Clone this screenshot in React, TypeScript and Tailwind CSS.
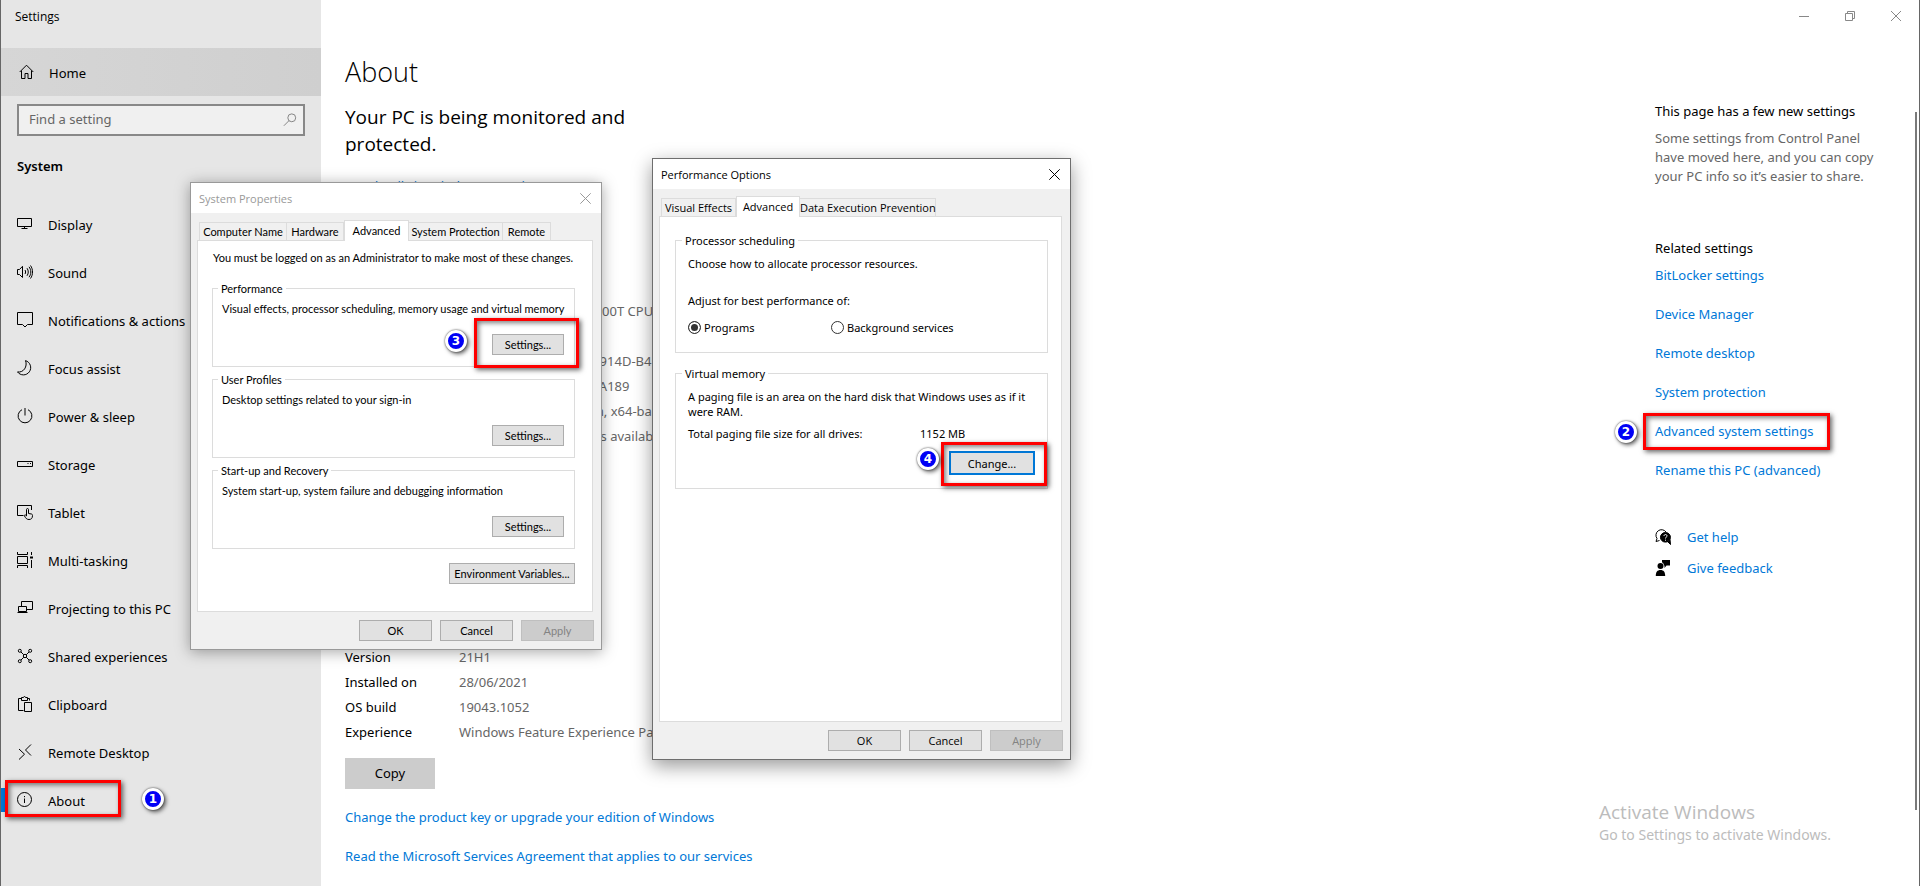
import React from 'react';

const BODY_FONT = "font-['Segoe_UI','Noto_Sans',sans-serif]";
const UI_FONT = "font-['Segoe_UI','Open_Sans',sans-serif]";
const CLASSIC_FONT = "font-['Microsoft_Sans_Serif','Lato',sans-serif]";

interface IconProps {
    children: React.ReactNode;
    className?: string;
}

const Icon: React.FC<IconProps> = ({ children, className = 'w-4 h-4' }) => (
    <svg className={className} viewBox="0 0 16 16" fill="none" stroke="currentColor" strokeWidth="1" aria-hidden="true">
        {children}
    </svg>
);

const navItems = [
    {
        label: 'Display',
        icon: <path d="M.5 2.5h14v8H.5zM7.5 10.5v2M4.5 12.5h6" />,
    },
    {
        label: 'Sound',
        icon: <path d="M.5 5.5h2l3-3.2v11.2l-3-3H.5zM8 6c.8 1.200.8 2.800 0 4M10 4.200c1.700 2.300 1.700 5.300 0 7.600M12 2.800c2.400 3.100 2.400 7.300 0 10.400M13.500 1.500c2.700 3.900 2.700 9.100 0 13" />,
    },
    {
        label: 'Notifications & actions',
        icon: <path d="M.5.5h15v12h-5L8 15l-2.500-2.500h-5z" />,
    },
    {
        label: 'Focus assist',
        icon: <path d="M8.500.6a7.300 7.300 0 1 1-8 11.300C6.500 13 10.800 6.500 8.500.6z" />,
    },
    {
        label: 'Power & sleep',
        icon: <path d="M5 1.700a6.900 6.900 0 1 0 6 0M8 0v7.500" />,
    },
    {
        label: 'Storage',
        icon: <path d="M.5 5.500h15v5H.5zM10.500 7.500h1M13 7.500h1" />,
    },
    {
        label: 'Tablet',
        icon: <path d="M6.500 11.500h-6v-10h14V6M9.500 12V5.500c0-1.300 2-1.300 2 0v4l3 .5c.7.2 1 .7 1 1.500 0 3-1.500 4-3.500 4s-3-.8-4.500-3.500c-.5-1 .7-1.700 2-.2" />,
    },
    {
        label: 'Multi-tasking',
        icon: (
            <>
                <path d="M.5 4.500h10v7H.5zM.5 0v2.500h10V0M.5 16v-2.500h10V16M14.500 0v3M14.500 8v8" />
                <path d="M13 4.500h3v2h-3z" fill="currentColor" stroke="none" />
            </>
        ),
    },
    {
        label: 'Projecting to this PC',
        icon: <path d="M4.500 6.500v-5h11v8h-5.500M1.500 6.500h8v5h-8zM.5 12.500h10" />,
    },
    {
        label: 'Shared experiences',
        icon: (
            <>
                <circle cx="2.800" cy="2.800" r="1.500" />
                <circle cx="13.200" cy="2.800" r="1.500" />
                <circle cx="2.800" cy="13.200" r="1.500" />
                <circle cx="13.200" cy="13.200" r="1.500" />
                <circle cx="8" cy="8" r="1.700" />
                <path d="M4 4l2.800 2.800M12 4L9.200 6.800M4 12l2.800-2.800M12 12L9.200 9.200" />
            </>
        ),
    },
    {
        label: 'Clipboard',
        icon: <path d="M6.500 14.500h-5v-12h3M10.500 2.500h2v2M4.500 4.500v-3h2c0-1.300 2-1.300 2 0h2v3zM7.500 6.500h7v9h-7z" />,
    },
    {
        label: 'Remote Desktop',
        icon: <path d="M14 .5L8.500 6l5.500 5.500M2 5l5.500 5.200L2 15.500" />,
    },
    {
        label: 'About',
        icon: (
            <>
                <circle cx="7.500" cy="7.500" r="7" />
                <path d="M7.500 6.500V11M7.500 4v1.200" />
            </>
        ),
    },
];

const deviceIds = [
    '2FDC1AD0-5B3E-4DAC-914D-B4',
    '00330-80000-000000-AA189',
    '64-bit operating system, x64-based',
    'No pen or touch input is available',
];

const windowsSpecs = [
    ['Version', '21H1'],
    ['Installed on', '28/06/2021'],
    ['OS build', '19043.1052'],
    ['Experience', 'Windows Feature Experience Pack'],
];

const relatedLinks = [
    'BitLocker settings',
    'Device Manager',
    'Remote desktop',
    'System protection',
    'Advanced system settings',
    'Rename this PC (advanced)',
];

// Red frame drawn over the control of a step
const Highlight: React.FC<{ className: string }> = ({ className }) => (
    <span
        className={`absolute border-3 border-[#fe0000] pointer-events-none shadow-[2px_2px_5px_rgba(0,0,0,0.6),inset_2px_2px_5px_rgba(0,0,0,0.5)] ${className}`}
    />
);

const StepBadge: React.FC<{ step: number; className: string }> = ({ step, className }) => (
    <span
        className={`absolute flex items-center justify-center w-[22px] h-[22px] rounded-full border-3 border-white bg-[#0000f5] text-white text-xs leading-none font-bold font-['DejaVu_Sans',sans-serif] shadow-[0_0_2px_rgba(0,0,0,0.7),2px_2px_4px_rgba(0,0,0,0.6)] ${className}`}
    >
        {step}
    </span>
);

const Sidebar: React.FC = () => (
    <nav className="w-80 shrink-0 bg-[#e6e6e6]">
        <div className={`h-12 px-3.5 pt-[7px] text-xs leading-5 ${UI_FONT}`}>Settings</div>
        <a href="#home" className="flex items-center h-12 pl-[18px] gap-3.5 bg-linear-to-r from-[#d6d6d6] to-[#cfcfcf]">
            <Icon>
                <path d="M.7 8L7.500 1.200 14.300 8M2.500 6.500v8h3.500v-5h3v5h3.500v-8" />
            </Icon>
            <span className="pt-1">Home</span>
        </a>
        <label className="flex items-center h-8 mt-2 mx-4 pl-2.5 pr-1.5 border-2 border-[#888] bg-[#f0f0f0]">
            <input
                type="text"
                aria-label="Find a setting"
                placeholder="Find a setting"
                className="grow min-w-0 outline-none placeholder:text-[#666]"
            />
            <Icon className="w-3.5 h-3.5 text-[#777]">
                <circle cx="10" cy="5.500" r="4.500" />
                <path d="M6.800 8.800L1 14.600" />
            </Icon>
        </label>
        <h2 className="mt-5 ml-4 leading-5 font-semibold">System</h2>
        <ul className="mt-6">
            {navItems.map(({ label, icon }) => (
                <li key={label} className="relative">
                    <a href={`#${label}`} className="flex items-center h-12 pl-4 gap-[15px] whitespace-nowrap">
                        <Icon>{icon}</Icon>
                        <span className="pt-1">{label}</span>
                    </a>
                    {label === 'About' && (
                        <>
                            <span className="absolute left-0 top-3 w-1 h-6 bg-[#0078d7]" />
                            <Highlight className="left-1 top-1 w-[116px] h-[37px]" />
                            <StepBadge step={1} className="left-[141px] top-3" />
                        </>
                    )}
                </li>
            ))}
        </ul>
    </nav>
);

const AboutPage: React.FC = () => (
    <main className="grow min-w-0 pt-5 pl-6">
        <h1 className={`text-[27px] leading-10 font-light ${UI_FONT}`}>About</h1>
        <p className={`mt-3 w-[300px] text-[19px] leading-[27px] ${UI_FONT}`}>Your PC is being monitored and protected.</p>
        <a href="#security" className="block mt-[18px] leading-5 text-[#0078d7]">See details in Windows Security</a>
        <ul className="mt-[103px] pl-[114px] leading-[25px] whitespace-nowrap text-[#666]">
            <li className="mb-[25px]">Intel(R) Core(TM) i5-10500T CPU</li>
            {deviceIds.map((value) => (
                <li key={value}>{value}</li>
            ))}
        </ul>
        <dl className="mt-[196px] leading-[25px] whitespace-nowrap">
            {windowsSpecs.map(([name, value]) => (
                <div key={name} className="flex">
                    <dt className="w-[114px] shrink-0">{name}</dt>
                    <dd className="text-[#666]">{value}</dd>
                </div>
            ))}
        </dl>
        <button className="block mt-[13px] w-[90px] h-[31px] bg-[#ccc]">Copy</button>
        <a href="#key" className="block mt-[18px] leading-5 text-[#0078d7]">
            Change the product key or upgrade your edition of Windows
        </a>
        <a href="#agreement" className="block mt-[19px] leading-5 text-[#0078d7]">
            Read the Microsoft Services Agreement that applies to our services
        </a>
    </main>
);

const RelatedPanel: React.FC = () => (
    <aside className="w-[264px] shrink-0 pt-[69px]">
        <h3 className="leading-5">This page has a few new settings</h3>
        <p className="mt-2 leading-[19px] text-[#666]">
            Some settings from Control Panel
            <br />
            have moved here, and you can copy
            <br />
            your PC info so it’s easier to share.
        </p>
        <h3 className="mt-[52px] leading-5">Related settings</h3>
        <ul className="flex flex-col gap-[19px] mt-[7px] leading-5 text-[#0078d7]">
            {relatedLinks.map((link) => (
                <li key={link} className="relative">
                    <a href={`#${link}`}>{link}</a>
                    {link === 'Advanced system settings' && (
                        <>
                            <Highlight className="-left-3 -top-2 w-[187px] h-[37px]" />
                            <StepBadge step={2} className="-left-10 top-0" />
                        </>
                    )}
                </li>
            ))}
        </ul>
        <div className="flex flex-col gap-[11px] mt-[47px] leading-5">
            <a href="#help" className="flex items-center gap-4 text-[#0078d7]">
                <Icon className="w-4 h-4 text-black">
                    <path d="M4.500 11.500L1 12.500l1-3A5.200 5.200 0 1 1 11 3" />
                    <path d="M10.500 3.500a5 4.800 0 1 1-.1 9.600 5 4.800 0 0 1 .1-9.600zM12 12l3.500 3.500-.5-5z" fill="currentColor" />
                    <path d="M9 7c0-2 3-2 3 0 0 1-1.500 1.200-1.500 2.500M10.500 10.700v1" stroke="white" />
                </Icon>
                Get help
            </a>
            <a href="#feedback" className="flex items-center gap-4 text-[#0078d7]">
                <Icon className="w-4 h-4 text-black">
                    <g fill="currentColor" stroke="none">
                        <circle cx="5.500" cy="6" r="3" />
                        <path d="M.8 16c0-4 1.500-6 4.700-6s4.700 2 4.700 6zM7 0h8v5.500h-3.500L9.500 8V5.500H9C9 4 8 2.500 7 2.500z" />
                    </g>
                </Icon>
                Give feedback
            </a>
        </div>
    </aside>
);

const WindowControls: React.FC = () => (
    <div className="flex justify-end h-8 text-[#888]">
        <button aria-label="Minimize" className="flex items-center justify-center w-[46px]">
            <svg className="w-2.5 h-2.5" viewBox="0 0 10 10" fill="none" stroke="currentColor"><path d="M0 5.500h10" /></svg>
        </button>
        <button aria-label="Restore" className="flex items-center justify-center w-[46px]">
            <svg className="w-2.5 h-2.5" viewBox="0 0 10 10" fill="none" stroke="currentColor">
                <path d="M.5 2.500h7v7h-7zM2.500 2.500v-2h7v7h-2" />
            </svg>
        </button>
        <button aria-label="Close" className="flex items-center justify-center w-[46px]">
            <svg className="w-2.5 h-2.5" viewBox="0 0 10 10" fill="none" stroke="currentColor"><path d="M0 0l10 10M10 0L0 10" /></svg>
        </button>
    </div>
);

const DialogTitle: React.FC<{ title: string; className?: string }> = ({ title, className = '' }) => (
    <header className={`flex items-center justify-between h-[30px] pl-2 pr-2.5 bg-white ${UI_FONT} ${className}`}>
        <h2>{title}</h2>
        <button aria-label={`Close ${title}`}>
            <svg className="w-[11px] h-[11px]" viewBox="0 0 11 11" fill="none" stroke="currentColor">
                <path d="M.3.3l10.400 10.400M10.700.3L.3 10.700" />
            </svg>
        </button>
    </header>
);

const Tab: React.FC<{ label: string; width: string; active?: boolean }> = ({ label, width, active = false }) => (
    <button
        role="tab"
        aria-selected={active}
        className={`${width} border border-b-0 border-[#dcdcdc] text-center whitespace-nowrap ${
            active ? 'relative -mb-px h-[21px] pb-0.5 bg-white' : 'h-[18px] -ml-px first:ml-0 bg-[#f0f0f0]'
        }`}
    >
        {label}
    </button>
);

const PushButton: React.FC<{ label: string; size: string; disabled?: boolean }> = ({ label, size, disabled }) => (
    <button
        disabled={disabled}
        className={`${size} flex items-center justify-center border border-[#adadad] bg-[#e1e1e1] disabled:border-[#bfbfbf] disabled:bg-[#ccc] disabled:text-[#838383]`}
    >
        {label}
    </button>
);

const DialogFooter: React.FC = () => (
    <footer className="flex justify-end gap-2 mt-2 pr-[7px]">
        <PushButton label="OK" size="w-[73px] h-[21px]" />
        <PushButton label="Cancel" size="w-[73px] h-[21px]" />
        <PushButton label="Apply" size="w-[73px] h-[21px]" disabled />
    </footer>
);

const propertyGroups = [
    { title: 'Performance', text: 'Visual effects, processor scheduling, memory usage and virtual memory' },
    { title: 'User Profiles', text: 'Desktop settings related to your sign-in' },
    { title: 'Start-up and Recovery', text: 'System start-up, system failure and debugging information' },
];

const SystemProperties: React.FC = () => (
    <section
        className={`absolute left-[189px] top-[182px] w-[412px] h-[468px] border border-[#999] bg-[#f0f0f0] text-[11px] leading-[15px] text-black shadow-[0_2px_14px_rgba(0,0,0,0.35)] ${CLASSIC_FONT}`}
    >
        <DialogTitle title="System Properties" className="text-[#999]" />
        <div role="tablist" className="flex items-end h-[27px] pl-2">
            <Tab label="Computer Name" width="w-[88px]" />
            <Tab label="Hardware" width="w-[58px]" />
            <Tab label="Advanced" width="w-[65px]" active />
            <Tab label="System Protection" width="w-[95px]" />
            <Tab label="Remote" width="w-[49px]" />
        </div>
        <div className="h-[372px] ml-1.5 mr-2 pt-[9px] pl-3.5 pr-[17px] border border-[#dcdcdc] bg-white">
            <p className="pl-px whitespace-nowrap">You must be logged on as an Administrator to make most of these changes.</p>
            <div className="flex flex-col gap-[5px] mt-4">
                {propertyGroups.map(({ title, text }, index) => (
                    <fieldset key={title} className="relative min-w-0 h-[86px] border border-[#dcdcdc] pl-[9px] pr-2.5">
                        <legend className="-ml-1 px-[3px]">{title}</legend>
                        <p className="mt-[5px] whitespace-nowrap">{text}</p>
                        <div className="flex justify-end mt-[18px]">
                            <PushButton label="Settings..." size="w-[72px] h-[21px]" />
                        </div>
                        {index === 0 && (
                            <>
                                <Highlight className="left-[261px] top-[22px] w-[105px] h-[50px]" />
                                <StepBadge step={3} className="left-[232px] top-[34px]" />
                            </>
                        )}
                    </fieldset>
                ))}
            </div>
            <div className="flex justify-end mt-3.5">
                <PushButton label="Environment Variables..." size="w-[126px] h-[21px]" />
            </div>
        </div>
        <DialogFooter />
    </section>
);

const PerformanceOptions: React.FC = () => (
    <section
        className={`absolute left-[651px] top-[158px] w-[419px] h-[602px] border border-[#6e6e6e] bg-[#f0f0f0] text-[11px] leading-[15px] text-black shadow-[0_6px_18px_rgba(0,0,0,0.4)] ${UI_FONT}`}
    >
        <DialogTitle title="Performance Options" />
        <div role="tablist" className="flex items-end h-[27px] pl-2">
            <Tab label="Visual Effects" width="w-[75px]" />
            <Tab label="Advanced" width="w-16" active />
            <Tab label="Data Execution Prevention" width="w-[137px]" />
        </div>
        <div className={`h-[506px] ml-1.5 mr-2 pt-4 pl-[15px] pr-[13px] border border-[#dcdcdc] bg-white ${BODY_FONT}`}>
            <fieldset className="h-[120px] border border-[#dcdcdc] pl-3">
                <legend className="-ml-1.5 px-[3px]">Processor scheduling</legend>
                <p className="mt-2">Choose how to allocate processor resources.</p>
                <p className="mt-[22px]">Adjust for best performance of:</p>
                <div className="flex mt-3">
                    <label className="flex items-center gap-[3px] w-[143px]">
                        <input
                            type="radio"
                            name="adjust"
                            defaultChecked
                            className="appearance-none w-[13px] h-[13px] rounded-full border border-[#333] bg-white checked:bg-[#333] checked:shadow-[inset_0_0_0_2px_white]"
                        />
                        Programs
                    </label>
                    <label className="flex items-center gap-[3px]">
                        <input
                            type="radio"
                            name="adjust"
                            className="appearance-none w-[13px] h-[13px] rounded-full border border-[#333] bg-white checked:bg-[#333] checked:shadow-[inset_0_0_0_2px_white]"
                        />
                        Background services
                    </label>
                </div>
            </fieldset>
            <fieldset className="relative h-[123px] mt-[13px] border border-[#dcdcdc] pl-3 pr-3">
                <legend className="-ml-1.5 px-[3px]">Virtual memory</legend>
                <p className="mt-2 whitespace-nowrap">
                    A paging file is an area on the hard disk that Windows uses as if it
                    <br />
                    were RAM.
                </p>
                <p className="flex mt-[7px]">
                    <span className="w-[232px]">Total paging file size for all drives:</span>
                    <span>1152 MB</span>
                </p>
                <div className="flex justify-end mt-2.5">
                    <button className="w-[86px] h-6 border-2 border-[#0078d7] bg-[#e1e1e1]">Change...</button>
                </div>
                <Highlight className="right-0 top-[61px] w-[106px] h-11" />
                <StepBadge step={4} className="right-[108px] top-[67px]" />
            </fieldset>
        </div>
        <DialogFooter />
    </section>
);

const App: React.FC = () => {
    return (
        <div className={`relative flex min-h-screen overflow-hidden border-l border-r border-[#666] bg-white text-[13px] text-black ${BODY_FONT}`}>
            <Sidebar />
            <div className="flex flex-col grow min-w-0">
                <WindowControls />
                <div className="flex grow">
                    <AboutPage />
                    <RelatedPanel />
                </div>
            </div>

            {/* Scroll thumb */}
            <div className="absolute right-0.5 top-28 bottom-19 w-0.5 bg-[#7a7a7a]" />

            {/* Activation watermark */}
            <div className="absolute right-[84px] bottom-10 w-[236px] text-[#bcbcbc] whitespace-nowrap">
                <p className={`text-[19px] leading-6 ${UI_FONT}`}>Activate Windows</p>
                <p className="text-sm leading-[22px]">Go to Settings to activate Windows.</p>
            </div>

            <SystemProperties />
            <PerformanceOptions />
        </div>
    );
};

export default App;
